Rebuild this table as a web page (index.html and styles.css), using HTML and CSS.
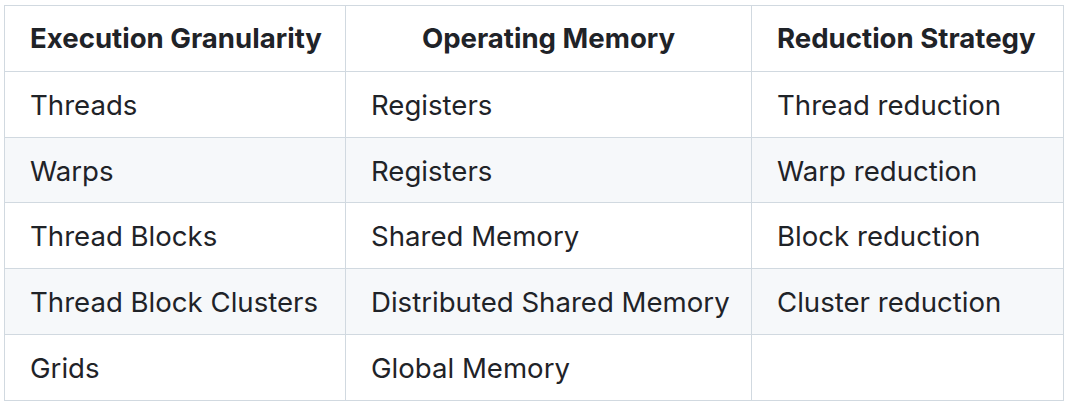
FILE: index.html
```html
<!DOCTYPE html>
<html>
<head>
<meta charset="utf-8">
<link rel="stylesheet" href="styles.css">
</head>
<body>
<table class="md-table">
  <colgroup>
    <col class="col-a">
    <col class="col-b">
    <col class="col-c">
  </colgroup>
  <thead>
    <tr>
      <th>Execution Granularity</th>
      <th class="center">Operating Memory</th>
      <th>Reduction Strategy</th>
    </tr>
  </thead>
  <tbody>
    <tr><td>Threads</td><td>Registers</td><td>Thread reduction</td></tr>
    <tr><td>Warps</td><td>Registers</td><td>Warp reduction</td></tr>
    <tr><td>Thread Blocks</td><td>Shared Memory</td><td>Block reduction</td></tr>
    <tr><td>Thread Block Clusters</td><td>Distributed Shared Memory</td><td>Cluster reduction</td></tr>
    <tr><td>Grids</td><td>Global Memory</td><td></td></tr>
  </tbody>
</table>
</body>
</html>
```

FILE: styles.css
```css
html, body {
  margin: 0;
  padding: 0;
  background: #ffffff;
}

body {
  padding: 5px 0 0 4px;
  font-family: Inter, "Noto Sans", "Liberation Sans", sans-serif;
  color: #1f2328;
}

.md-table {
  border-collapse: collapse;
  border-spacing: 0;
  table-layout: fixed;
  font-size: 27.6px;
  line-height: 40.8px;
  width: 1059px;
}

.col-a { width: 341px; }
.col-b { width: 406px; }
.col-c { width: 312px; }

.md-table th,
.md-table td {
  border: 1px solid #d1d9e0;
  padding: 13px 0 11px 25px;
  text-align: left;
  white-space: nowrap;
  overflow: visible;
}

.md-table th {
  font-weight: 650;
  padding-top: 12px;
  padding-bottom: 12px;
}

.md-table th.center {
  text-align: center;
  padding-left: 12px;
  padding-right: 12px;
}

.md-table tbody tr:nth-child(2n) {
  background: #f6f8fa;
}
```
